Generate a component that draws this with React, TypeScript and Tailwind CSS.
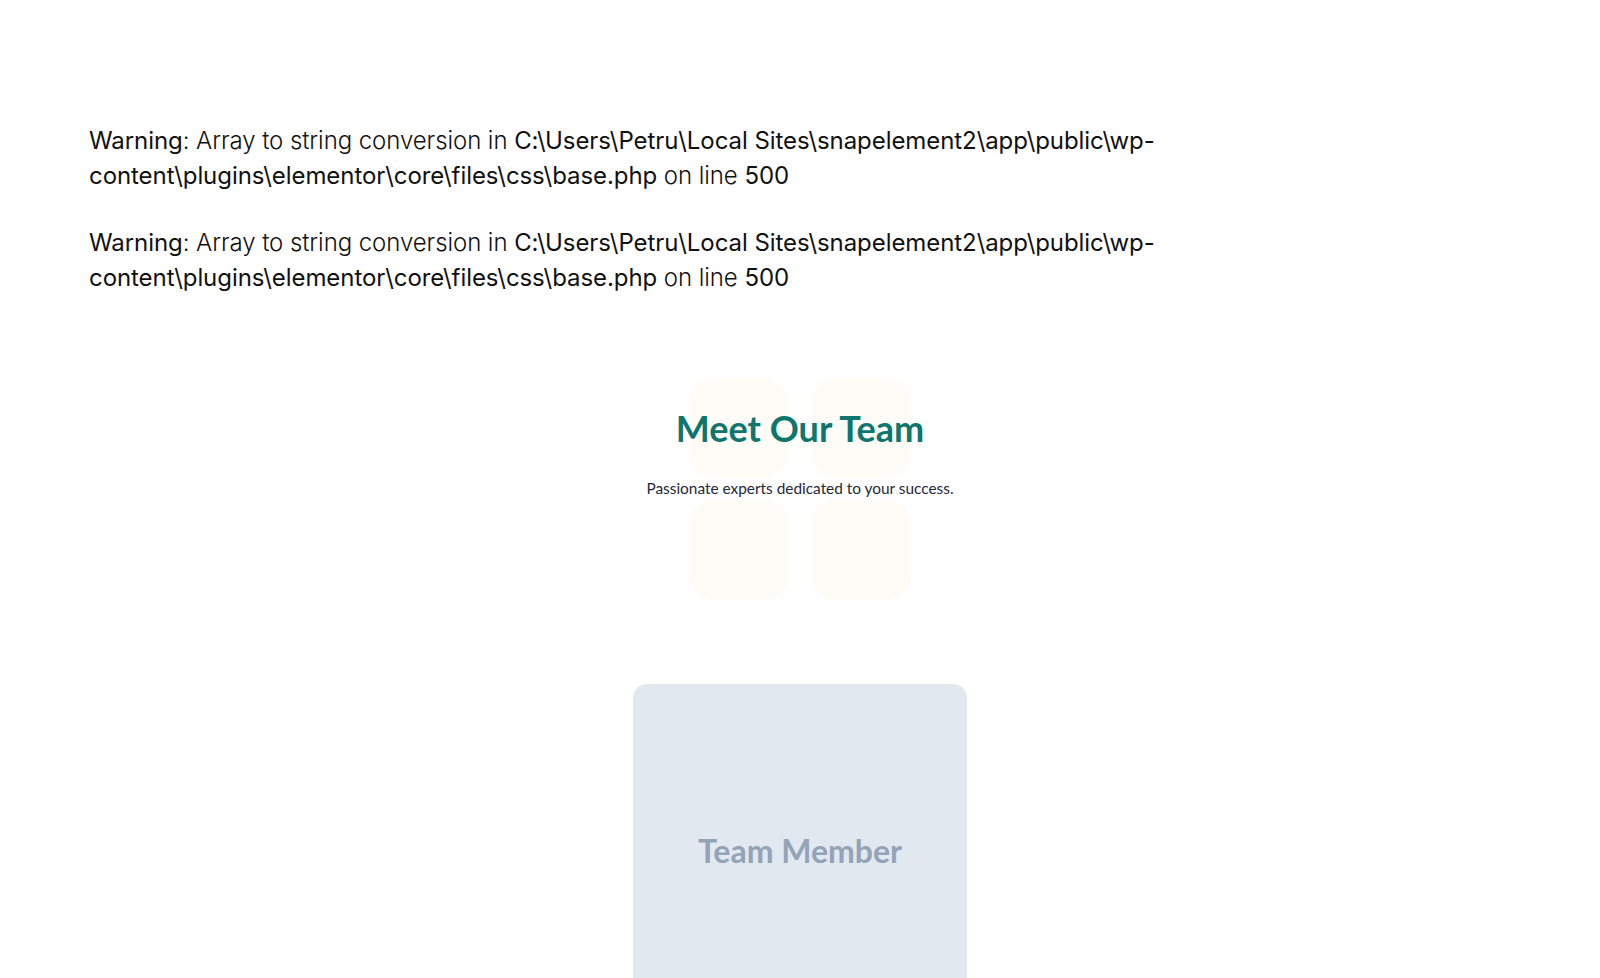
import React from 'react';

const warnings = [1, 2];

function Warning() {
	return (
		<p className="text-[24px] leading-[35px] text-[#111111] font-['Inter',sans-serif] tracking-[-0.003em]">
			<span className="font-normal">Warning</span>
			<span className="font-light">: Array to string conversion in </span>
			<span className="font-normal">C:\Users\Petru\Local Sites\snapelement2\app\public\wp-content\plugins\elementor\core\files\css\base.php</span>
			<span className="font-light"> on line </span>
			<span className="font-normal">500</span>
		</p>
	);
}

export default function App() {
	return (
		<div className="min-h-[978px] w-full bg-white overflow-hidden">
			<div className="pl-[89px] pt-[123px] w-[1175px] flex flex-col gap-[32px]">
				{warnings.map((w) => (
					<Warning key={w} />
				))}
			</div>

			<section className="mt-[83px] flex flex-col items-center">
				<div className="relative flex flex-col items-center w-full">
					<div className="absolute left-1/2 top-0 -translate-x-1/2 grid grid-cols-2 gap-[22px]">
						<div className="h-[100px] w-[100px] rounded-[24px] bg-[#fdfcf6]" />
						<div className="h-[100px] w-[100px] rounded-[24px] bg-[#fdfcf6]" />
						<div className="h-[100px] w-[100px] rounded-[24px] bg-[#fdfcf6]" />
						<div className="h-[100px] w-[100px] rounded-[24px] bg-[#fdfcf6]" />
					</div>
					<h2 className="relative mt-[28px] text-[36px] leading-[44px] font-bold text-[#0f766e] font-['Lato',sans-serif]">
						Meet Our Team
					</h2>
					<p className="relative mt-[28px] text-[15.4px] leading-[20px] text-[#1f2937] font-['Lato',sans-serif]">
						Passionate experts dedicated to your success.
					</p>
				</div>

				<div className="mt-[186px] h-[334px] w-[334px] rounded-[14px] bg-[#e2e8f0] flex items-center justify-center">
					<span className="text-[32px] font-bold text-[#94a3b8] font-['Lato',sans-serif]">Team Member</span>
				</div>
			</section>
		</div>
	);
}
